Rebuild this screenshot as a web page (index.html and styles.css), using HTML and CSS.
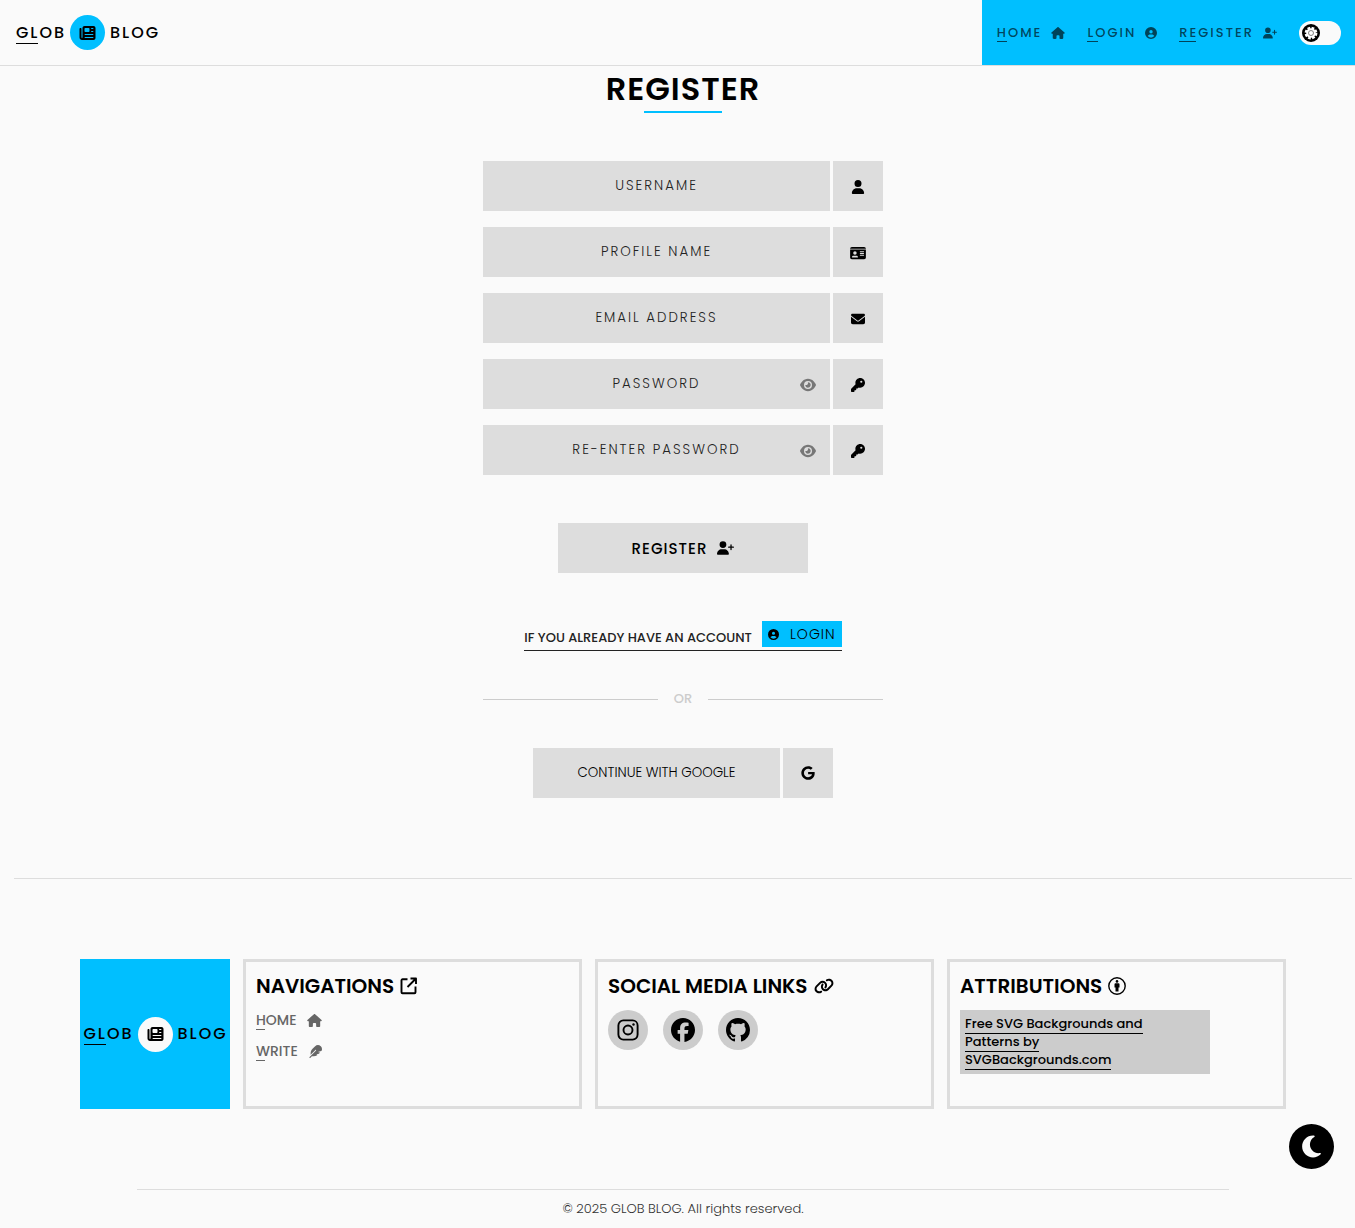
FILE: index.html
```html
<!DOCTYPE html>
<html lang="en">
<head>
<meta charset="utf-8">
<meta name="viewport" content="width=device-width, initial-scale=1">
<title>Register | Glob Blog</title>
<link rel="stylesheet" href="styles.css">
</head>
<body>
<svg class="sprite" aria-hidden="true">
  <symbol id="news" viewBox="0 0 512 512"><path d="M96 96c0-35.3 28.7-64 64-64H448c35.3 0 64 28.7 64 64V416c0 35.3-28.7 64-64 64H80c-44.2 0-80-35.8-80-80V128c0-17.7 14.3-32 32-32s32 14.3 32 32V400c0 8.8 7.2 16 16 16s16-7.2 16-16V96zm64 24v80c0 13.3 10.7 24 24 24H296c13.3 0 24-10.7 24-24V120c0-13.3-10.7-24-24-24H184c-13.3 0-24 10.7-24 24zm208-8c0 8.800 7.200 16 16 16h48c8.800 0 16-7.200 16-16s-7.200-16-16-16H384c-8.800 0-16 7.200-16 16zm0 96c0 8.800 7.200 16 16 16h48c8.800 0 16-7.200 16-16s-7.200-16-16-16H384c-8.800 0-16 7.200-16 16zM160 304c0 8.800 7.200 16 16 16H432c8.800 0 16-7.200 16-16s-7.200-16-16-16H176c-8.800 0-16 7.200-16 16zm0 96c0 8.800 7.200 16 16 16H432c8.800 0 16-7.200 16-16s-7.200-16-16-16H176c-8.800 0-16 7.200-16 16z"/></symbol>
  <symbol id="house" viewBox="0 0 576 512"><path d="M575.800 255.500c0 18-15 32.100-32 32.100h-32l.7 160.200c0 2.700-.2 5.400-.5 8.100V472c0 22.100-17.900 40-40 40H392c-22.100 0-40-17.900-40-40V384c0-17.700-14.300-32-32-32H256c-17.700 0-32 14.300-32 32v88c0 22.100-17.900 40-40 40H104c-22.100 0-40-17.900-40-40V287.600H32c-18 0-32-14-32-32.100c0-9 3-17 10-24L266.400 8c7-7 15-8 22-8s15 2 21 7L564.800 231.500c8 7 12 15 11 24z"/></symbol>
  <symbol id="user" viewBox="0 0 448 512"><path d="M224 256A128 128 0 1 0 224 0a128 128 0 1 0 0 256zm-45.700 48C79.800 304 0 383.800 0 482.300C0 498.700 13.300 512 29.700 512H418.300c16.400 0 29.700-13.300 29.700-29.700C448 383.800 368.200 304 269.700 304H178.300z"/></symbol>
  <symbol id="user-plus" viewBox="0 0 640 512"><path d="M96 128a128 128 0 1 1 256 0A128 128 0 1 1 96 128zM0 482.300C0 383.800 79.800 304 178.300 304h91.400C368.200 304 448 383.800 448 482.300c0 16.400-13.300 29.700-29.700 29.700H29.700C13.300 512 0 498.700 0 482.300zM504 312V248H440c-13.300 0-24-10.700-24-24s10.700-24 24-24h64V136c0-13.300 10.700-24 24-24s24 10.700 24 24v64h64c13.300 0 24 10.700 24 24s-10.700 24-24 24H552v64c0 13.300-10.700 24-24 24s-24-10.700-24-24z"/></symbol>
  <symbol id="circle-user" viewBox="0 0 512 512"><path d="M399 384.200C376.900 345.800 335.400 320 288 320H224c-47.400 0-88.900 25.800-111 64.200c35.200 39.200 86.200 63.800 143 63.800s107.800-24.700 143-63.800zM0 256a256 256 0 1 1 512 0A256 256 0 1 1 0 256zm256 16a72 72 0 1 0 0-144 72 72 0 1 0 0 144z"/></symbol>
  <symbol id="envelope" viewBox="0 0 512 512"><path d="M48 64C21.500 64 0 85.500 0 112c0 15.100 7.100 29.300 19.200 38.400L236.800 313.600c11.400 8.500 27 8.500 38.400 0L492.800 150.400c12.100-9.100 19.200-23.300 19.200-38.400c0-26.500-21.500-48-48-48H48zM0 176V384c0 35.300 28.700 64 64 64H448c35.300 0 64-28.700 64-64V176L294.400 339.200c-22.800 17.100-54 17.100-76.800 0L0 176z"/></symbol>
  <symbol id="key" viewBox="0 0 512 512"><path d="M336 352c97.200 0 176-78.800 176-176S433.200 0 336 0S160 78.800 160 176c0 18.700 2.900 36.800 8.300 53.700L7 391c-4.500 4.500-7 10.600-7 17v80c0 13.300 10.700 24 24 24h80c13.300 0 24-10.700 24-24V448h40c13.300 0 24-10.700 24-24V384h40c6.400 0 12.500-2.500 17-7l33.300-33.300c16.900 5.400 35 8.300 53.700 8.300zM376 96a40 40 0 1 1 0 80 40 40 0 1 1 0-80z"/></symbol>
  <symbol id="eye" viewBox="0 0 576 512"><path d="M288 32c-80.800 0-145.500 36.800-192.600 80.600C48.600 156 17.300 208 2.500 243.700c-3.300 7.900-3.300 16.700 0 24.600C17.300 304 48.600 356 95.400 399.400C142.500 443.200 207.200 480 288 480s145.500-36.800 192.600-80.600c46.800-43.500 78.100-95.400 93-131.100c3.300-7.900 3.300-16.700 0-24.600c-14.900-35.700-46.200-87.700-93-131.100C433.500 68.800 368.800 32 288 32zM144 256a144 144 0 1 1 288 0 144 144 0 1 1 -288 0zm144-64c0 35.300-28.700 64-64 64c-7.100 0-13.900-1.200-20.300-3.300c-5.500-1.800-11.900 1.600-11.700 7.400c.3 6.900 1.300 13.800 3.200 20.700c13.700 51.200 66.400 81.600 117.600 67.900s81.600-66.400 67.900-117.600c-11.100-41.500-47.800-69.400-88.600-71.100c-5.800-.2-9.200 6.100-7.400 11.700c2.100 6.400 3.300 13.200 3.300 20.300z"/></symbol>
  <symbol id="id-card" viewBox="0 0 576 512"><path d="M0 96H576c0-35.300-28.700-64-64-64H64C28.700 32 0 60.700 0 96zm0 32V416c0 35.300 28.700 64 64 64H512c35.300 0 64-28.700 64-64V128H0zM64 405.300c0-29.500 23.900-53.300 53.300-53.300H234.700c29.500 0 53.300 23.900 53.300 53.300c0 5.900-4.800 10.700-10.700 10.700H74.700c-5.900 0-10.700-4.800-10.700-10.700zM176 192a64 64 0 1 1 0 128 64 64 0 1 1 0-128zm176 16c0-8.800 7.200-16 16-16H496c8.800 0 16 7.200 16 16s-7.200 16-16 16H368c-8.800 0-16-7.200-16-16zm0 64c0-8.800 7.200-16 16-16H496c8.800 0 16 7.200 16 16s-7.200 16-16 16H368c-8.800 0-16-7.200-16-16zm0 64c0-8.800 7.200-16 16-16H496c8.800 0 16 7.200 16 16s-7.200 16-16 16H368c-8.800 0-16-7.200-16-16z"/></symbol>
  <symbol id="google" viewBox="0 0 488 512"><path d="M488 261.800C488 403.300 391.100 504 248 504 110.800 504 0 393.200 0 256S110.800 8 248 8c66.800 0 123 24.500 166.300 64.900l-67.500 64.900C258.500 52.600 94.300 116.600 94.300 256c0 86.500 69.100 156.600 153.700 156.600 98.200 0 135-70.400 140.800-106.900H248v-85.300h236.100c2.300 12.700 3.900 24.900 3.900 41.400z"/></symbol>
  <symbol id="feather" viewBox="0 0 512 512"><path d="M278.500 215.600L23 471c-9.400 9.400-9.400 24.600 0 33.900s24.600 9.400 33.900 0l57-57h68c49.700 0 97.900-14.400 139-41c11.100-7.200 5.500-23-7.800-23c-5.100 0-9.200-4.100-9.200-9.200c0-4.100 2.700-7.600 6.500-8.800l81-24.300c2.500-.8 4.800-2.100 6.700-4l22.400-22.400c10.100-10.100 2.900-27.300-11.300-27.300l-32.200 0c-5.100 0-9.200-4.100-9.200-9.200c0-4.100 2.700-7.600 6.500-8.800l112-33.600c4-1.200 7.400-3.900 9.300-7.700C506.400 207.600 512 184.100 512 160c0-41-16.300-80.300-45.300-109.300l-5.500-5.500C432.300 16.300 393 0 352 0s-80.300 16.300-109.300 45.300L139 149C91 197 64 262.100 64 330v55.300L253.600 195.800c6.200-6.200 16.400-6.200 22.600 0c5.400 5.400 6.100 13.600 2.200 19.800z"/></symbol>
  <symbol id="moon" viewBox="0 0 384 512"><path d="M223.500 32C100 32 0 132.300 0 256S100 480 223.500 480c60.600 0 115.500-24.200 155.800-63.400c5-4.900 6.300-12.500 3.100-18.700s-10.100-9.700-17-8.500c-9.800 1.700-19.800 2.600-30.100 2.600c-96.900 0-175.500-78.800-175.500-176c0-65.800 36-123.100 89.300-153.300c6.100-3.500 9.200-10.500 7.700-17.300s-7.300-11.900-14.300-12.500c-6.300-.5-12.600-.8-19-.8z"/></symbol>
  <symbol id="facebook" viewBox="0 0 512 512"><path d="M512 256C512 114.600 397.400 0 256 0S0 114.600 0 256C0 376 82.700 476.800 194.200 504.500V334.200H141.400V256h52.800V222.300c0-87.100 39.400-127.500 125-127.500c16.200 0 44.200 3.200 55.700 6.400V172c-6-.6-16.500-1-29.600-1c-42 0-58.200 15.900-58.200 57.200V256h83.600l-14.400 78.200H287V510.100C413.800 494.800 512 386.900 512 256z"/></symbol>
  <symbol id="github" viewBox="0 0 16 16"><path d="M8 0C3.580 0 0 3.580 0 8c0 3.540 2.290 6.530 5.470 7.590.4.070.55-.17.55-.38 0-.19-.01-.82-.01-1.490-2.010.37-2.530-.49-2.690-.94-.09-.23-.48-.94-.82-1.130-.28-.15-.68-.52-.01-.53.63-.01 1.080.58 1.230.82.72 1.210 1.870.87 2.330.66.070-.52.28-.87.51-1.070-1.780-.2-3.640-.89-3.640-3.950 0-.87.31-1.590.82-2.150-.08-.2-.36-1.020.08-2.120 0 0 .67-.21 2.200.82.64-.18 1.320-.27 2-.27.68 0 1.360.09 2 .27 1.530-1.040 2.200-.82 2.200-.82.44 1.100.16 1.920.08 2.120.51.56.82 1.270.82 2.150 0 3.070-1.870 3.750-3.650 3.950.29.25.54.73.54 1.480 0 1.070-.01 1.930-.01 2.200 0 .21.15.46.55.38A8.013 8.013 0 0016 8c0-4.420-3.580-8-8-8z"/></symbol>
  <symbol id="instagram" viewBox="0 0 24 24"><g fill="none" stroke="currentColor" stroke-width="1.900"><rect x="2.400" y="2.400" width="19.200" height="19.200" rx="5"/><circle cx="12" cy="12" r="4.500"/></g><circle cx="17.500" cy="6.500" r="1.200"/></symbol>
  <symbol id="external" viewBox="0 0 18 18"><path fill="none" stroke="currentColor" stroke-width="1.900" stroke-linejoin="round" d="M7.500 2.300H2.500a1 1 0 0 0-1 1V15.300a1 1 0 0 0 1 1H14.500a1 1 0 0 0 1-1V9.500M10.500 1.500H16V7M16 1.500L7.500 10"/></symbol>
  <symbol id="chain" viewBox="0 0 640 512"><path d="M579.800 267.700c56.500-56.500 56.500-148 0-204.500c-50-50-128.800-56.500-186.300-15.400l-1.600 1.100c-14.400 10.300-17.700 30.300-7.400 44.600s30.300 17.700 44.600 7.400l1.600-1.100c32.100-22.900 76-19.300 103.800 8.600c31.500 31.500 31.500 82.500 0 114L422.300 334.800c-31.500 31.500-82.500 31.500-114 0c-27.900-27.900-31.500-71.800-8.600-103.800l1.100-1.600c10.300-14.400 6.900-34.400-7.400-44.600s-34.400-6.900-44.600 7.400l-1.100 1.600C206.500 251.200 213 330 263 380c56.500 56.500 148 56.500 204.500 0L579.800 267.700zM60.200 244.300c-56.500 56.500-56.500 148 0 204.500c50 50 128.800 56.500 186.300 15.400l1.600-1.100c14.400-10.300 17.700-30.300 7.400-44.600s-30.300-17.700-44.600-7.400l-1.600 1.100c-32.100 22.900-76 19.300-103.800-8.600C74 372 74 321 105.500 289.500L217.700 177.200c31.500-31.500 82.500-31.500 114 0c27.900 27.900 31.500 71.800 8.600 103.900l-1.100 1.600c-10.300 14.400-6.900 34.400 7.400 44.600s34.400 6.900 44.600-7.400l1.100-1.600C433.500 260.800 427 182 377 132c-56.500-56.500-148-56.500-204.500 0L60.200 244.300z"/></symbol>
  <symbol id="person" viewBox="0 0 18 18"><circle cx="9" cy="9" r="8.200" fill="none" stroke="currentColor" stroke-width="1.400"/><circle cx="9" cy="4.400" r="1.300"/><path d="M7.500 6.200h3a1 1 0 0 1 1 1V10.500h-1V14.500h-3V10.500h-1V7.200a1 1 0 0 1 1-1z"/></symbol>
  <symbol id="sun" viewBox="0 0 18 18"><circle cx="9" cy="9" r="9" fill="#000"/><circle cx="9" cy="9" r="4.800" fill="#fff"/><circle cx="9" cy="9" r="5.200" fill="none" stroke="#fff" stroke-width="2.400" stroke-dasharray="2.680 1.400"/><circle cx="9" cy="9" r="2.500" fill="none" stroke="#666" stroke-width=".8"/></symbol>
</svg>

<header class="topbar">
  <a class="logo" href="#"><span class="logo-word logo-first">GLOB</span><span class="logo-mark"><svg class="icon"><use href="#news"/></svg></span><span class="logo-word">BLOG</span></a>
  <nav class="topnav" aria-label="Main">
    <a class="nav-link" href="#"><span class="tick">HOME</span><svg class="icon"><use href="#house"/></svg></a>
    <a class="nav-link" href="#"><span class="tick">LOGIN</span><svg class="icon small"><use href="#circle-user"/></svg></a>
    <a class="nav-link" href="#"><span class="tick">REGISTER</span><svg class="icon"><use href="#user-plus"/></svg></a>
    <label class="switch"><input type="checkbox" class="switch-input" aria-label="Theme"><svg class="switch-knob" aria-hidden="true"><use href="#sun"/></svg></label>
  </nav>
</header>

<div class="page">
  <main class="register">
    <h1 class="title">REGISTER</h1>
    <form class="form">
      <div class="field"><input class="field-input" id="username" type="text" placeholder="USERNAME"><label class="field-icon" for="username" aria-label="Username"><svg class="icon"><use href="#user"/></svg></label></div>
      <div class="field"><input class="field-input" id="profile" type="text" placeholder="PROFILE NAME"><label class="field-icon" for="profile" aria-label="Profile name"><svg class="icon wide"><use href="#id-card"/></svg></label></div>
      <div class="field"><input class="field-input" id="email" type="email" placeholder="EMAIL ADDRESS"><label class="field-icon" for="email" aria-label="Email address"><svg class="icon"><use href="#envelope"/></svg></label></div>
      <div class="field"><input class="field-input" id="password" type="password" placeholder="PASSWORD"><button class="reveal" type="button" aria-label="Show password"><svg class="icon wide"><use href="#eye"/></svg></button><label class="field-icon" for="password" aria-label="Password"><svg class="icon"><use href="#key"/></svg></label></div>
      <div class="field"><input class="field-input" id="repeat" type="password" placeholder="RE-ENTER PASSWORD"><button class="reveal" type="button" aria-label="Show password"><svg class="icon wide"><use href="#eye"/></svg></button><label class="field-icon" for="repeat" aria-label="Re-enter password"><svg class="icon"><use href="#key"/></svg></label></div>
      <button class="submit" type="submit">REGISTER<svg class="icon plus"><use href="#user-plus"/></svg></button>
    </form>
    <p class="login-line"><span>IF YOU ALREADY HAVE AN ACCOUNT</span><a class="login-link" href="#"><svg class="icon"><use href="#circle-user"/></svg>LOGIN</a></p>
    <div class="divider">OR</div>
    <button class="google" type="button"><span class="google-text">CONTINUE WITH GOOGLE</span><span class="google-icon"><svg class="icon"><use href="#google"/></svg></span></button>
  </main>

  <footer class="footer">
    <div class="cards">
      <a class="logo logo-card" href="#"><span class="logo-word logo-first">GLOB</span><span class="logo-mark"><svg class="icon"><use href="#news"/></svg></span><span class="logo-word">BLOG</span></a>
      <section class="card">
        <h2 class="card-title">NAVIGATIONS<svg class="icon"><use href="#external"/></svg></h2>
        <a class="foot-link" href="#"><span class="tick">HOME</span><svg class="icon"><use href="#house"/></svg></a>
        <a class="foot-link" href="#"><span class="tick">WRITE</span><svg class="icon"><use href="#feather"/></svg></a>
      </section>
      <section class="card">
        <h2 class="card-title">SOCIAL MEDIA LINKS<svg class="icon link"><use href="#chain"/></svg></h2>
        <div class="socials">
          <a class="social" href="#" aria-label="Instagram"><svg class="icon"><use href="#instagram"/></svg></a>
          <a class="social" href="#" aria-label="Facebook"><svg class="icon"><use href="#facebook"/></svg></a>
          <a class="social" href="#" aria-label="GitHub"><svg class="icon"><use href="#github"/></svg></a>
        </div>
      </section>
      <section class="card">
        <h2 class="card-title">ATTRIBUTIONS<svg class="icon"><use href="#person"/></svg></h2>
        <div class="credit"><a class="credit-link" href="#">Free SVG Backgrounds and<br>Patterns by<br>SVGBackgrounds.com</a></div>
      </section>
    </div>
    <p class="copyright">© 2025 GLOB BLOG. All rights reserved.</p>
  </footer>
</div>
<button class="theme" type="button" aria-label="Dark mode"><svg class="icon"><use href="#moon"/></svg></button>
</body>
</html>
```

FILE: styles.css
```css
* { box-sizing: border-box; }

body {
  margin: 0;
  background: #fafafa;
  color: #000;
  font-family: "Poppins", "Inter", "Liberation Sans", sans-serif;
  font-size: 13px;
}

a { color: inherit; text-decoration: none; }
h1, h2, p { margin: 0; }
button, input { border: 0; border-radius: 0; font-family: inherit; color: inherit; }
button { padding: 0; cursor: pointer; }
.sprite { display: none; }
.icon { display: block; flex: none; width: 14px; height: 14px; fill: currentColor; }
.icon.wide { width: 16px; }

/* Header */
.topbar {
  display: flex;
  justify-content: space-between;
  height: 66px;
  padding-left: 16px;
  border-bottom: 1px solid #ddd;
}
.logo {
  display: flex;
  align-items: center;
  gap: 5px;
  font-size: 16px;
  line-height: 22px;
  font-weight: 500;
  letter-spacing: 2px;
}
.logo-word { width: 49px; white-space: nowrap; }
.logo-first { position: relative; }
.logo-first::after {
  content: "";
  position: absolute;
  left: 0;
  bottom: 0;
  width: 22px;
  height: 1px;
  background: currentColor;
}
.logo-mark {
  display: grid;
  place-items: center;
  width: 35px;
  height: 35px;
  border-radius: 50%;
  background: #00bfff;
}
.logo-mark .icon { width: 17px; height: 16px; }
.topnav {
  display: flex;
  align-items: center;
  gap: 22px;
  padding: 0 14px 0 15px;
  background: #00bfff;
}
.nav-link {
  display: flex;
  align-items: center;
  gap: 9px;
  color: rgba(0, 0, 0, .65);
  font-size: 13px;
  line-height: 18px;
  font-weight: 500;
  letter-spacing: 2px;
}
.nav-link .icon { height: 12px; }
.nav-link .icon.small { width: 12px; }
.tick { position: relative; }
.tick::after {
  content: "";
  position: absolute;
  left: 0;
  bottom: 0;
  width: 22%;
  height: 1px;
  background: currentColor;
}
.switch { position: relative; display: block; width: 42px; height: 24px; }
.switch-input {
  appearance: none;
  display: block;
  width: 100%;
  height: 100%;
  margin: 0;
  border-radius: 12px;
  background: #fafafa;
}
.switch-knob { position: absolute; left: 3px; top: 3px; width: 18px; height: 18px; }

/* Registration */
.page { padding: 0 3px 0 14px; }
.register {
  display: flex;
  flex-direction: column;
  align-items: center;
  padding-bottom: 80px;
  border-bottom: 1px solid #ddd;
}
.title {
  display: flex;
  flex-direction: column;
  align-items: center;
  font-size: 32px;
  line-height: 45px;
  font-weight: 600;
  letter-spacing: 1px;
}
.title::after { content: ""; width: 50%; height: 2px; background: #00bfff; }
.form {
  display: flex;
  flex-direction: column;
  gap: 16px;
  width: 400px;
  max-width: 100%;
  margin-top: 48px;
}
.field { position: relative; display: flex; gap: 3px; height: 50px; }
.field-input {
  flex: 1;
  min-width: 0;
  padding: 0 36px;
  background: #ddd;
  font-weight: 300;
  letter-spacing: 2px;
  text-align: center;
}
.field-input::placeholder { color: #222; opacity: 1; }
.field-icon {
  display: grid;
  place-items: center;
  width: 50px;
  padding-top: 2px;
  background: #ddd;
}
.reveal {
  position: absolute;
  right: 67px;
  top: 18px;
  background: none;
  color: #777;
}
.reveal .icon { height: 16px; }
.submit {
  display: flex;
  align-items: center;
  justify-content: center;
  gap: 10px;
  align-self: center;
  width: 250px;
  height: 50px;
  margin-top: 32px;
  background: #ddd;
  font-size: 15px;
  font-weight: 500;
  letter-spacing: 1px;
}
.icon.plus { width: 17px; }
.login-line {
  display: flex;
  align-items: flex-end;
  gap: 10px;
  margin-top: 48px;
  padding-bottom: 3px;
  border-bottom: 1px solid #222;
  color: #222;
  font-size: 13px;
  line-height: 18px;
  font-weight: 500;
}
.login-link {
  display: flex;
  align-items: center;
  gap: 11px;
  height: 26px;
  padding: 0 6px;
  background: #00bfff;
  color: #000;
  font-size: 14px;
  font-weight: 300;
  letter-spacing: 1px;
}
.login-link .icon { width: 11px; height: 11px; }
.divider {
  display: flex;
  align-items: center;
  gap: 16px;
  width: 400px;
  max-width: 100%;
  margin-top: 38px;
  color: #ccc;
  font-size: 13px;
  line-height: 20px;
  font-weight: 500;
}
.divider::before, .divider::after { content: ""; flex: 1; height: 1px; background: #ccc; }
.google {
  display: flex;
  gap: 3px;
  width: 300px;
  height: 50px;
  margin-top: 39px;
  background: none;
  font-weight: 300;
}
.google-text, .google-icon { display: grid; place-items: center; height: 50px; background: #ddd; }
.google-text { flex: 1; }
.google-icon { width: 50px; }

/* Footer */
.footer { padding: 80px 66px 9px; }
.cards { display: grid; grid-template-columns: 150px repeat(3, 1fr); gap: 13px; }
.card { min-height: 150px; padding: 12px 10px; border: 3px solid #ddd; }
.logo-card { justify-content: center; background: #00bfff; }
.logo-card .logo-mark { background: #fafafa; }
.card-title {
  display: flex;
  align-items: center;
  gap: 6px;
  margin-bottom: 12px;
  font-size: 20px;
  line-height: 24px;
  font-weight: 600;
}
.card-title .icon { width: 18px; height: 18px; }
.card-title .icon.link { width: 20px; height: 16px; }
.foot-link {
  display: flex;
  align-items: center;
  gap: 10px;
  width: max-content;
  margin-bottom: 11px;
  color: #666;
  font-size: 14px;
  line-height: 20px;
  font-weight: 500;
}
.foot-link .icon { width: 15px; height: 13px; }
.socials { display: flex; gap: 15px; }
.social {
  display: grid;
  place-items: center;
  width: 40px;
  height: 40px;
  border-radius: 50%;
  background: #ccc;
}
.social .icon { width: 24px; height: 24px; }
.credit {
  width: 250px;
  max-width: 100%;
  padding: 5px;
  background: #ccc;
  font-size: 13px;
  line-height: 18px;
  font-weight: 500;
}
.credit-link { border-bottom: 1px solid #000; }
.copyright {
  margin: 80px 57px 0;
  padding-top: 9px;
  border-top: 1px solid #ddd;
  color: #333;
  font-size: 13px;
  line-height: 20px;
  font-weight: 300;
  text-align: center;
}
.theme {
  position: fixed;
  right: 21px;
  bottom: 59px;
  display: grid;
  place-items: center;
  width: 45px;
  height: 45px;
  border-radius: 50%;
  background: #000;
  color: #fafafa;
}
.theme .icon { width: 21px; height: 25px; }
```
